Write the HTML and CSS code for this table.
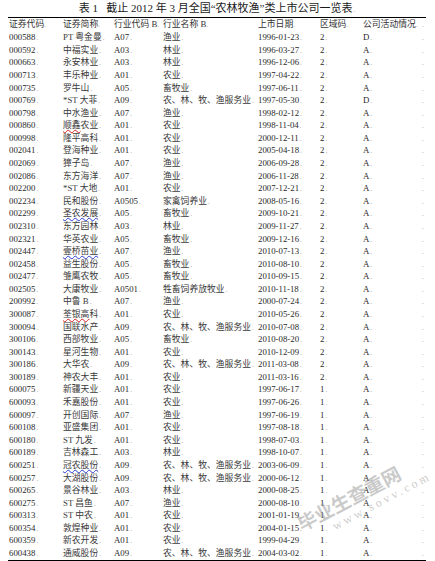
FILE: index.html
```html
<!DOCTYPE html>
<html lang="zh">
<head>
<meta charset="utf-8">
<link rel="stylesheet" href="styles.css">
</head>
<body>
<div class="page">
  <div class="title">表 1&nbsp;&nbsp;&nbsp;截止 2012 年 3 月全国“农林牧渔”类上市公司一览表<span class="m"></span></div>
  <table class="list">
    <colgroup>
      <col class="c1"><col class="c2"><col class="c3"><col class="c4"><col class="c5"><col class="c6"><col class="c7"><col class="c8">
    </colgroup>
    <thead>
      <tr><th>证券代码<span class="m"></span></th><th>证券简称<span class="m"></span></th><th>行业代码 B<span class="m"></span></th><th>行业名称 B<span class="m"></span></th><th>上市日期<span class="m"></span></th><th>区域码<span class="m"></span></th><th>公司活动情况<span class="m"></span></th><th><span class="m"></span></th></tr>
    </thead>
    <tbody>
      <tr><td>000588</td><td>PT 粤金曼</td><td>A07</td><td>渔业</td><td>1996-01-23</td><td>2</td><td>D</td><td></td></tr>
      <tr><td>000592</td><td>中福实业</td><td>A03</td><td>林业</td><td>1996-03-27</td><td>2</td><td>A</td><td></td></tr>
      <tr><td>000663</td><td>永安林业</td><td>A03</td><td>林业</td><td>1996-12-06</td><td>2</td><td>A</td><td></td></tr>
      <tr><td>000713</td><td>丰乐种业</td><td>A01</td><td>农业</td><td>1997-04-22</td><td>2</td><td>A</td><td></td></tr>
      <tr><td>000735</td><td>罗牛山</td><td>A05</td><td>畜牧业</td><td>1997-06-11</td><td>2</td><td>A</td><td></td></tr>
      <tr><td>000769</td><td>*ST 大菲</td><td>A09</td><td>农、林、牧、渔服务业</td><td>1997-05-30</td><td>2</td><td>D</td><td></td></tr>
      <tr><td>000798</td><td>中水渔业</td><td>A07</td><td>渔业</td><td>1998-02-12</td><td>2</td><td>A</td><td></td></tr>
      <tr><td>000860</td><td><span class="wr">顺鑫</span>农业</td><td>A01</td><td>农业</td><td>1998-11-04</td><td>2</td><td>A</td><td></td></tr>
      <tr><td>000998</td><td>隆平高科</td><td>A01</td><td>农业</td><td>2000-12-11</td><td>2</td><td>A</td><td></td></tr>
      <tr><td>002041</td><td>登海种业</td><td>A01</td><td>农业</td><td>2005-04-18</td><td>2</td><td>A</td><td></td></tr>
      <tr><td>002069</td><td>獐子岛</td><td>A07</td><td>渔业</td><td>2006-09-28</td><td>2</td><td>A</td><td></td></tr>
      <tr><td>002086</td><td>东方海洋</td><td>A07</td><td>渔业</td><td>2006-11-28</td><td>2</td><td>A</td><td></td></tr>
      <tr><td>002200</td><td>*ST 大地</td><td>A01</td><td>农业</td><td>2007-12-21</td><td>2</td><td>A</td><td></td></tr>
      <tr><td>002234</td><td>民和股份</td><td>A0505</td><td>家禽饲养业</td><td>2008-05-16</td><td>2</td><td>A</td><td></td></tr>
      <tr><td>002299</td><td><span class="wb">圣农发展</span></td><td>A05</td><td>畜牧业</td><td>2009-10-21</td><td>2</td><td>A</td><td></td></tr>
      <tr><td>002310</td><td>东方园林</td><td>A03</td><td>林业</td><td>2009-11-27</td><td>2</td><td>A</td><td></td></tr>
      <tr><td>002321</td><td>华英农业</td><td>A05</td><td>畜牧业</td><td>2009-12-16</td><td>2</td><td>A</td><td></td></tr>
      <tr><td>002447</td><td><span class="wb">壹桥苗业</span></td><td>A07</td><td>渔业</td><td>2010-07-13</td><td>2</td><td>A</td><td></td></tr>
      <tr><td>002458</td><td>益生股份</td><td>A05</td><td>畜牧业</td><td>2010-08-10</td><td>2</td><td>A</td><td></td></tr>
      <tr><td>002477</td><td>雏鹰农牧</td><td>A05</td><td>畜牧业</td><td>2010-09-15</td><td>2</td><td>A</td><td></td></tr>
      <tr><td>002505</td><td>大康牧业</td><td>A0501</td><td>牲畜饲养放牧业</td><td>2010-11-18</td><td>2</td><td>A</td><td></td></tr>
      <tr><td>200992</td><td>中鲁 B</td><td>A07</td><td>渔业</td><td>2000-07-24</td><td>2</td><td>A</td><td></td></tr>
      <tr><td>300087</td><td><span class="wr">荃银高</span>科</td><td>A01</td><td>农业</td><td>2010-05-26</td><td>2</td><td>A</td><td></td></tr>
      <tr><td>300094</td><td>国联水产</td><td>A09</td><td>农、林、牧、渔服务业</td><td>2010-07-08</td><td>2</td><td>A</td><td></td></tr>
      <tr><td>300106</td><td>西部牧业</td><td>A05</td><td>畜牧业</td><td>2010-08-20</td><td>2</td><td>A</td><td></td></tr>
      <tr><td>300143</td><td>星河生物</td><td>A01</td><td>农业</td><td>2010-12-09</td><td>2</td><td>A</td><td></td></tr>
      <tr><td>300186</td><td>大华农</td><td>A09</td><td>农、林、牧、渔服务业</td><td>2011-03-08</td><td>2</td><td>A</td><td></td></tr>
      <tr><td>300189</td><td>神农大丰</td><td>A01</td><td>农业</td><td>2011-03-16</td><td>2</td><td>A</td><td></td></tr>
      <tr><td>600075</td><td>新疆天业</td><td>A01</td><td>农业</td><td>1997-06-17</td><td>1</td><td>A</td><td></td></tr>
      <tr><td>600093</td><td>禾嘉股份</td><td>A01</td><td>农业</td><td>1997-06-26</td><td>1</td><td>A</td><td></td></tr>
      <tr><td>600097</td><td>开创国际</td><td>A07</td><td>渔业</td><td>1997-06-19</td><td>1</td><td>A</td><td></td></tr>
      <tr><td>600108</td><td>亚盛集团</td><td>A01</td><td>农业</td><td>1997-08-18</td><td>1</td><td>A</td><td></td></tr>
      <tr><td>600180</td><td>ST 九发</td><td>A01</td><td>农业</td><td>1998-07-03</td><td>1</td><td>A</td><td></td></tr>
      <tr><td>600189</td><td>吉林森工</td><td>A03</td><td>林业</td><td>1998-10-07</td><td>1</td><td>A</td><td></td></tr>
      <tr><td>600251</td><td><span class="wb">冠农股份</span></td><td>A09</td><td>农、林、牧、渔服务业</td><td>2003-06-09</td><td>1</td><td>A</td><td></td></tr>
      <tr><td>600257</td><td>大湖股份</td><td>A09</td><td>农、林、牧、渔服务业</td><td>2000-06-12</td><td>1</td><td>A</td><td></td></tr>
      <tr><td>600265</td><td>景谷林业</td><td>A03</td><td>林业</td><td>2000-08-25</td><td>1</td><td>A</td><td></td></tr>
      <tr><td>600275</td><td>ST 昌鱼</td><td>A07</td><td>渔业</td><td>2000-08-10</td><td>1</td><td>A</td><td></td></tr>
      <tr><td>600313</td><td>ST 中农</td><td>A01</td><td>农业</td><td>2001-01-19</td><td>1</td><td>A</td><td></td></tr>
      <tr><td>600354</td><td>敦煌种业</td><td>A01</td><td>农业</td><td>2004-01-15</td><td>1</td><td>A</td><td></td></tr>
      <tr><td>600359</td><td>新农开发</td><td>A01</td><td>农业</td><td>1999-04-29</td><td>1</td><td>A</td><td></td></tr>
      <tr><td>600438</td><td>通威股份</td><td>A09</td><td>农、林、牧、渔服务业</td><td>2004-03-02</td><td>1</td><td>A</td><td></td></tr>
    </tbody>
  </table>
  <div class="watermark">
    <div class="wm-cn">毕业生查重网</div>
    <div class="wm-url">www.sovv.com</div>
  </div>
</div>
</body>
</html>
```
FILE: styles.css
```css
html, body {
  margin: 0;
  padding: 0;
  background: #ffffff;
}
body {
  width: 435px;
  height: 561px;
  overflow: hidden;
  font-family: "Liberation Serif", "Noto Sans CJK SC", serif;
  color: #2a2a2a;
}
.page {
  position: relative;
  width: 435px;
  height: 561px;
  padding: 1px 0 0 8px;
  box-sizing: border-box;
}
.title {
  width: 418px;
  height: 16px;
  line-height: 14px;
  font-size: 11px;
  text-align: center;
  color: #1a1a1a;
}
.m::after,
.list td::after {
  content: ".";
  font-size: 7px;
  color: #9a9a9a;
  margin-left: 1px;
}
.list {
  width: 418px;
  border-collapse: collapse;
  table-layout: fixed;
  border-top: 1.5px solid #000;
  border-bottom: 1.5px solid #000;
  font-size: 8.8px;
}
.list .c1 { width: 54px; }
.list .c2 { width: 51px; }
.list .c3 { width: 49px; }
.list .c4 { width: 95px; }
.list .c5 { width: 62px; }
.list .c6 { width: 43px; }
.list .c7 { width: 59px; }
.list .c8 { width: 5px; }
.list th {
  font-weight: normal;
  text-align: left;
  height: 13.5px;
  padding: 0 0 0 1px;
  white-space: nowrap;
  overflow: visible;
  font-size: 8.8px;
  line-height: 10px;
  color: #333;
}
.list th .m::after { margin-left: 0; }
.list td {
  height: 12.58px;
  padding: 0 0 0 1px;
  white-space: nowrap;
  line-height: 10px;
  vertical-align: middle;
}
.list td:nth-child(2),
.list td:nth-child(4) {
  color: #3a3a3a;
}
.list td:last-child::after { margin-left: 0; }
.wr {
  text-decoration: underline wavy #d42020;
  text-decoration-thickness: 1px;
  text-underline-offset: 1px;
}
.wb {
  text-decoration: underline wavy #2a3ad0;
  text-decoration-thickness: 1px;
  text-underline-offset: 1px;
}
.watermark {
  position: absolute;
  left: 302px;
  top: 486px;
  width: 140px;
  height: 80px;
  transform: rotate(-28deg);
  transform-origin: 40% 50%;
  color: rgba(150, 150, 150, 0.5);
  pointer-events: none;
}
.wm-cn {
  font-family: "Noto Sans CJK SC", sans-serif;
  font-size: 19px;
  font-weight: bold;
  line-height: 22px;
  padding-left: 4px;
}
.wm-url {
  font-family: "Liberation Serif", serif;
  font-size: 12px;
  letter-spacing: 3px;
  padding-left: 34px;
  line-height: 14px;
}
```
